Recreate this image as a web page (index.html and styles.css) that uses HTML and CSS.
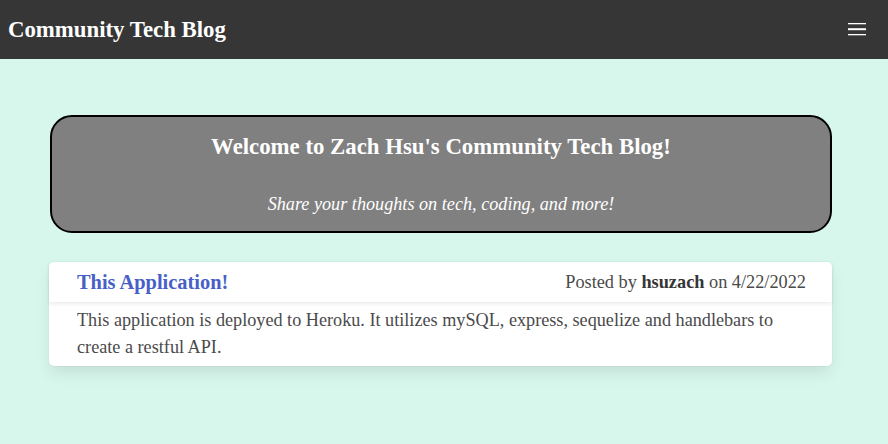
FILE: index.html
```html
<!DOCTYPE html>
<html>
<head>
<meta charset="utf-8">
<title>Community Tech Blog</title>
<link rel="stylesheet" href="styles.css">
</head>
<body>
<nav class="navbar">
  <a class="brand">Community Tech Blog</a>
  <span class="burger">
    <svg width="18" height="14" viewBox="0 0 18 14"><rect x="0" y="0" width="18" height="1.3" fill="#fff"/><rect x="0" y="5.2" width="18" height="2" fill="#fff"/><rect x="0" y="11" width="18" height="1.3" fill="#fff"/></svg>
  </span>
</nav>
<main class="main">
  <section class="hero">
    <h1 class="hero-title">Welcome to Zach Hsu's Community Tech Blog!</h1>
    <p class="hero-sub">Share your thoughts on tech, coding, and more!</p>
  </section>
  <article class="card">
    <header class="card-header">
      <h2 class="post-title">This Application!</h2>
      <span class="meta">Posted by <strong>hsuzach</strong> on 4/22/2022</span>
    </header>
    <div class="card-body">
      This application is deployed to Heroku. It utilizes mySQL, express, sequelize and handlebars to create a restful API.
    </div>
  </article>
</main>
</body>
</html>
```
FILE: styles.css
```css
html, body {
  margin: 0;
  padding: 0;
}
body {
  background: #d8f7ec;
  font-family: "Liberation Serif", "Times New Roman", serif;
  color: #4a4a4a;
  min-height: 444px;
}
.navbar {
  background: #363636;
  height: 59px;
  display: flex;
  align-items: center;
  justify-content: space-between;
  padding: 0 22px 0 8px;
}
.brand {
  color: #fff;
  font-weight: bold;
  font-size: 22.8px;
}
.burger {
  display: flex;
  align-items: center;
  height: 14px;
}
.burger svg { display: block; }
.main {
  padding: 56px 56px 0 50px;
  display: flex;
  flex-direction: column;
}
.hero {
  background: #808080;
  border: 2px solid #000;
  border-radius: 22px;
  height: 114px;
  flex-shrink: 0;
  text-align: center;
  color: #fff;
  display: flex;
  flex-direction: column;
  align-items: center;
}
.hero-title {
  margin: 16px 0 0;
  font-size: 22.8px;
  font-weight: bold;
  line-height: 28px;
}
.hero-sub {
  margin: 31px 0 0;
  font-style: italic;
  font-size: 18.2px;
  line-height: 24px;
}
.card {
  margin: 29px 0 0 -1px;
  background: #fff;
  border-radius: 5px;
  box-shadow: 0 8px 16px -2px rgba(10, 10, 10, 0.1), 0 0 0 1px rgba(10, 10, 10, 0.02);
}
.card-header {
  display: flex;
  justify-content: space-between;
  align-items: center;
  height: 40px;
  padding: 0 26px 0 28px;
  box-shadow: 0 2px 4px rgba(10, 10, 10, 0.08);
}
.post-title {
  margin: 0;
  font-size: 20.4px;
  font-weight: bold;
  color: #485fc7;
}
.meta {
  font-size: 18.3px;
}
.meta strong {
  color: #363636;
}
.card-body {
  padding: 5px 28px 5px 28px;
  font-size: 18.2px;
  line-height: 27px;
}
```
